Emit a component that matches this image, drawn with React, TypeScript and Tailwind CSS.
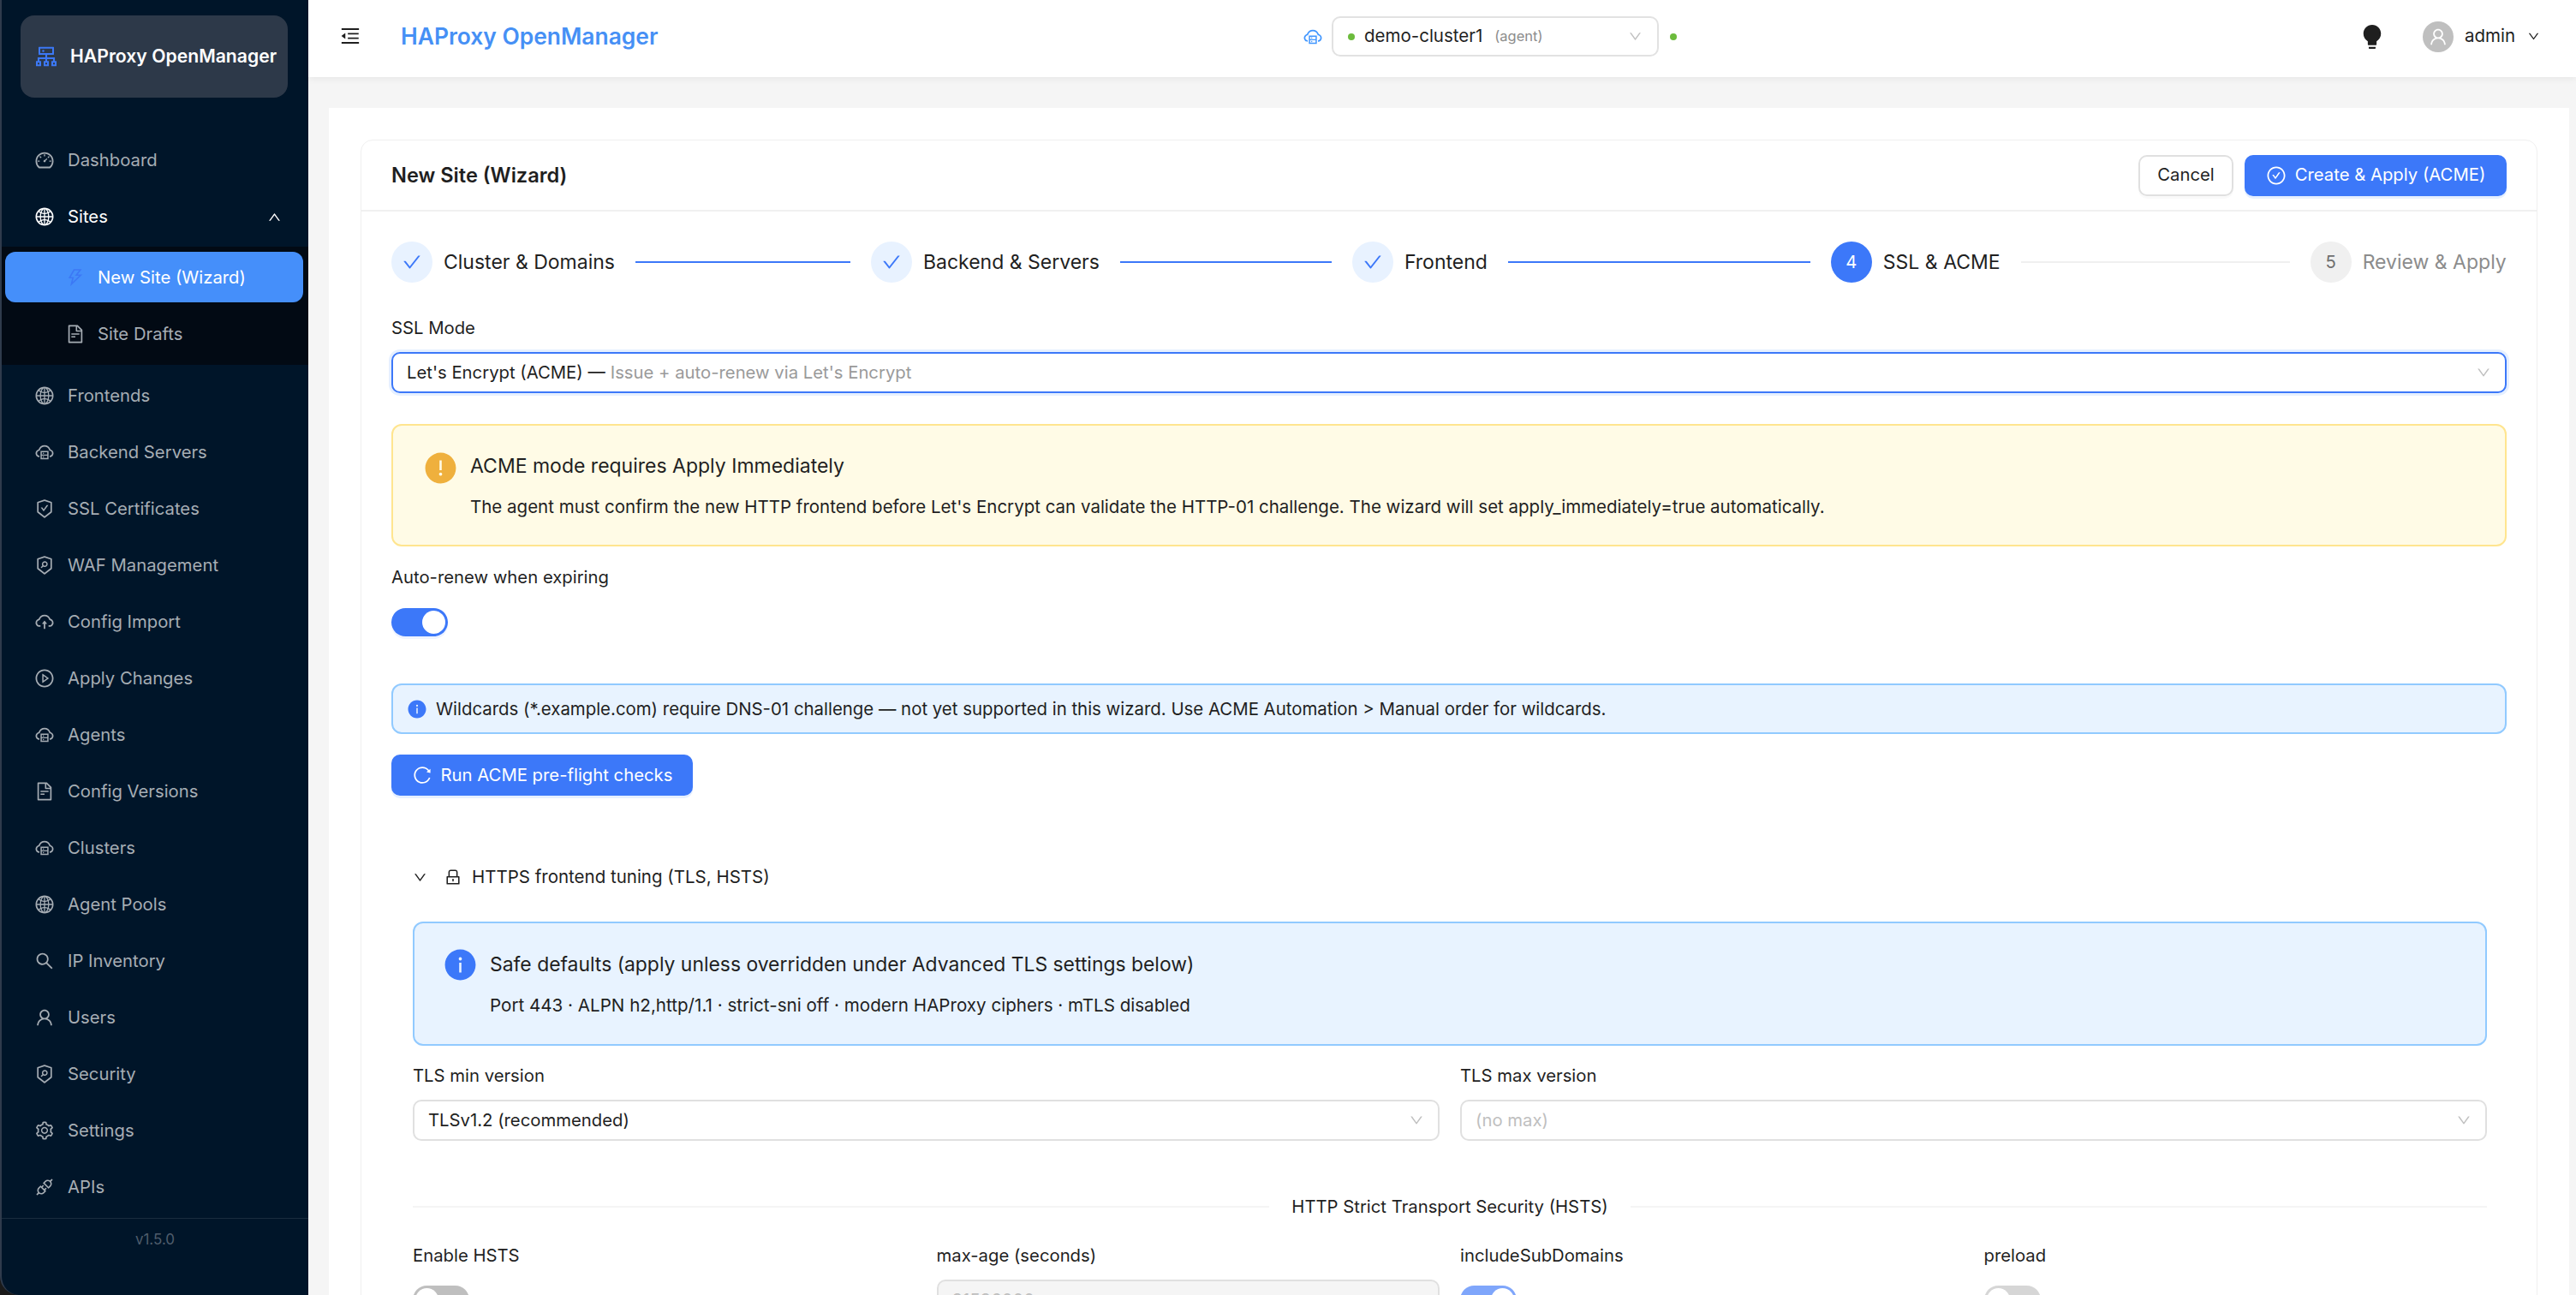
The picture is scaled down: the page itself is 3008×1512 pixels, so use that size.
import type { ReactNode } from "react";
import {
  AiOutlineDashboard,
  AiOutlineGlobal,
  AiOutlineThunderbolt,
  AiOutlineFileText,
  AiOutlineCloudServer,
  AiOutlineSafetyCertificate,
  AiOutlineSecurityScan,
  AiOutlineCloudUpload,
  AiOutlinePlayCircle,
  AiOutlineSearch,
  AiOutlineUser,
  AiOutlineSetting,
  AiOutlineApi,
  AiOutlineCluster,
  AiOutlineCheck,
  AiFillBulb,
  AiFillInfoCircle,
  AiFillExclamationCircle,
  AiOutlineMenuFold,
  AiOutlineLock,
  AiOutlineReload,
  AiOutlineCheckCircle,
  AiOutlineDown,
  AiOutlineUp,
} from "react-icons/ai";

const before = [
  { label: "Dashboard", icon: AiOutlineDashboard },
];

const after = [
  { label: "Frontends", icon: AiOutlineGlobal },
  { label: "Backend Servers", icon: AiOutlineCloudServer },
  { label: "SSL Certificates", icon: AiOutlineSafetyCertificate },
  { label: "WAF Management", icon: AiOutlineSecurityScan },
  { label: "Config Import", icon: AiOutlineCloudUpload },
  { label: "Apply Changes", icon: AiOutlinePlayCircle },
  { label: "Agents", icon: AiOutlineCloudServer },
  { label: "Config Versions", icon: AiOutlineFileText },
  { label: "Clusters", icon: AiOutlineCloudServer },
  { label: "Agent Pools", icon: AiOutlineGlobal },
  { label: "IP Inventory", icon: AiOutlineSearch },
  { label: "Users", icon: AiOutlineUser },
  { label: "Security", icon: AiOutlineSecurityScan },
  { label: "Settings", icon: AiOutlineSetting },
  { label: "APIs", icon: AiOutlineApi },
];

function MenuItem({ label, icon: Icon }: { label: string; icon: typeof AiOutlineGlobal }) {
  return (
    <div className="flex h-[58px] items-center gap-[15px] pl-[38px] text-[20.3px] text-[#a6adb4]">
      <Icon className="h-[24px] w-[24px] shrink-0" />
      <span className="pt-[1px]">{label}</span>
    </div>
  );
}

function Sidebar() {
  return (
    <aside className="flex h-full w-[360px] shrink-0 flex-col rounded-bl-[22px] border-l-2 border-[#2f3b4c] bg-[#001529]">
      <div className="ml-[22px] mr-[24px] mt-[18px] flex h-[96px] items-center gap-[12px] rounded-[16px] bg-[#2d3949] pl-[14px]">
        <AiOutlineCluster className="h-[32px] w-[32px] shrink-0 text-[#3c78f5]" />
        <span className="whitespace-nowrap text-[21.2px] font-semibold text-white">HAProxy OpenManager</span>
      </div>

      <nav className="mt-[44px] flex flex-col">
        {before.map((m) => (
          <MenuItem key={m.label} {...m} />
        ))}
        <div className="mt-[8px] flex h-[58px] items-center gap-[15px] pl-[38px] pr-[31px] text-[20.3px] text-white">
          <AiOutlineGlobal className="h-[24px] w-[24px] shrink-0" />
          <span className="pt-[1px]">Sites</span>
          <AiOutlineUp className="ml-auto h-[17px] w-[17px]" />
        </div>
        <div className="mt-[6px] flex h-[138px] flex-col bg-[#020a14] pt-[6px]">
          <div className="ml-[4px] mr-[6px] flex h-[59px] items-center gap-[14px] rounded-[12px] bg-[#458ffa] pl-[70px] text-[20.3px] text-white">
            <AiOutlineThunderbolt className="h-[24px] w-[24px] shrink-0 text-[#3c78f5]" />
            <span className="pt-[2px]">New Site (Wizard)</span>
          </div>
          <div className="ml-[4px] mr-[6px] mt-[8px] flex h-[58px] items-center gap-[14px] pl-[70px] text-[20.3px] text-[#a6adb4]">
            <AiOutlineFileText className="h-[24px] w-[24px] shrink-0" />
            <span className="pt-[1px]">Site Drafts</span>
          </div>
        </div>
        <div className="mt-[7px] flex flex-col gap-[8px]">
          {after.map((m) => (
            <MenuItem key={m.label} {...m} />
          ))}
        </div>
      </nav>

      <div className="mt-[7px] border-t border-[#1a2c3e] pt-[12px] text-center text-[17px] text-[#4f5d6c]">v1.5.0</div>
    </aside>
  );
}

function Topbar() {
  return (
    <header className="flex h-[90px] shrink-0 items-center bg-white pb-[5px] pr-[42px] shadow-[0_2px_8px_rgba(0,0,0,0.06)]">
      <div className="flex w-[1161px] shrink-0 items-center pl-[36px]">
        <AiOutlineMenuFold className="h-[26px] w-[26px] text-[#1f1f1f]" />
        <span className="ml-[46px] whitespace-nowrap text-[26.4px] font-semibold text-[#4690f5]">HAProxy OpenManager</span>
      </div>
      <AiOutlineCloudServer className="h-[24px] w-[24px] text-[#4096ff]" />
      <div className="ml-[10px] flex h-[47px] w-[382px] items-center rounded-[10px] border-2 border-[#e2e2e2] pl-[17px] pr-[17px]">
        <span className="h-[8px] w-[8px] rounded-full bg-[#6cbb3c]" />
        <span className="ml-[11px] text-[20.5px] text-[#1f1f1f]">demo-cluster1</span>
        <span className="ml-[14px] text-[16.5px] text-[#8c8c8c]">(agent)</span>
        <AiOutlineDown className="ml-auto h-[17px] w-[17px] text-[#bfbfbf]" />
      </div>
      <span className="ml-[13px] h-[8px] w-[8px] rounded-full bg-[#6cbb3c]" />
      <AiFillBulb className="ml-auto h-[32px] w-[32px] text-[#1f1f1f]" />
      <div className="ml-[43px] flex h-[36px] w-[36px] items-center justify-center rounded-full bg-[#bfbfbf]">
        <AiOutlineUser className="h-[24px] w-[24px] text-white" />
      </div>
      <span className="ml-[13px] text-[20.5px] text-[#1f1f1f]">admin</span>
      <AiOutlineDown className="ml-[14px] h-[15px] w-[15px] text-[#1f1f1f]" />
    </header>
  );
}

function StepDone({ title }: { title: string }) {
  return (
    <div className="flex shrink-0 items-center gap-[13px]">
      <div className="flex h-[48px] w-[48px] items-center justify-center rounded-full bg-[#e8f2ff]">
        <AiOutlineCheck className="h-[24px] w-[24px] text-[#3c78f9]" />
      </div>
      <span className="whitespace-nowrap text-[23px] text-[#1f1f1f]">{title}</span>
    </div>
  );
}

function Line({ w, on }: { w: string; on?: boolean }) {
  return <div className={`mx-[24px] h-[2px] shrink-0 ${w} ${on ? "bg-[#3c78f9]" : "bg-[#f0f0f0]"}`} />;
}

function Select({ children, className, border = "border-[#e0e0e0]" }: { children: ReactNode; className?: string; border?: string }) {
  return (
    <div className={`flex h-[48px] items-center rounded-[10px] border-2 bg-white pl-[16px] pr-[16px] text-[20.3px] ${border} ${className ?? ""}`}>
      {children}
      <AiOutlineDown className="ml-auto h-[18px] w-[18px] text-[#bfbfbf]" />
    </div>
  );
}

function Label({ children, className }: { children: ReactNode; className?: string }) {
  return <div className={`flex h-[28px] items-center text-[20.3px] text-[#1f1f1f] ${className ?? ""}`}>{children}</div>;
}

function Toggle({ on, color }: { on?: boolean; color: string }) {
  return (
    <div className={`flex h-[33px] w-[66px] items-center rounded-full p-[3px] ${color} ${on ? "justify-end" : "justify-start"}`}>
      <div className="h-[27px] w-[27px] rounded-full bg-white" />
    </div>
  );
}

function Wizard() {
  return (
    <div className="ml-[37px] mr-[37px] mt-[37px] flex-1 rounded-t-[14px] border border-[#f0f0f0]">
      <div className="flex h-[83px] items-center border-b-2 border-[#f0f0f0] pl-[35px] pr-[35px]">
        <h1 className="text-[23.6px] font-semibold text-[#1f1f1f]">New Site (Wizard)</h1>
        <button className="ml-auto h-[48px] w-[111px] rounded-[10px] border-2 border-[#e0e0e0] bg-white text-[20.3px] text-[#1f1f1f] shadow-[0_3px_0_rgba(0,0,0,0.02)]">
          Cancel
        </button>
        <button className="ml-[13px] flex h-[48px] w-[306px] items-center justify-center gap-[10px] rounded-[10px] bg-[#3c78f9] text-[20.3px] text-white shadow-[0_3px_0_#e6f0ff]">
          <AiOutlineCheckCircle className="h-[24px] w-[24px]" />
          Create &amp; Apply (ACME)
        </button>
      </div>

      <div className="px-[35px]">
        <div className="mt-[35px] flex items-center">
          <StepDone title="Cluster & Domains" />
          <Line w="w-[251px]" on />
          <StepDone title="Backend & Servers" />
          <Line w="w-[247px]" on />
          <StepDone title="Frontend" />
          <Line w="w-[353px]" on />
          <div className="flex shrink-0 items-center gap-[13px]">
            <div className="flex h-[48px] w-[48px] items-center justify-center rounded-full bg-[#3c78f9] text-[20.3px] text-white">4</div>
            <span className="text-[23px] text-[#1f1f1f]">SSL &amp; ACME</span>
          </div>
          <Line w="w-[314px]" />
          <div className="flex shrink-0 items-center gap-[13px]">
            <div className="flex h-[48px] w-[48px] items-center justify-center rounded-full bg-[#f0f0f0] text-[20.3px] text-[#6f6f6f]">5</div>
            <span className="whitespace-nowrap text-[23px] text-[#8c8c8c]">Review &amp; Apply</span>
          </div>
        </div>

        <Label className="mt-[39px]">SSL Mode</Label>
        <Select border="border-[#3c78f9]" className="mt-[14px] shadow-[0_0_0_3px_#e6f0ff]">
          <span className="text-[#1f1f1f]">Let's Encrypt (ACME) — </span>
          <span className="ml-[6px] text-[#9a9a9a]">Issue + auto-renew via Let's Encrypt</span>
        </Select>

        <div className="mt-[36px] flex h-[143px] items-start gap-[14px] rounded-[12px] border-2 border-[#ffe58f] bg-[#fffbe6] pl-[35px] pt-[29px]">
          <AiFillExclamationCircle className="h-[41px] w-[41px] shrink-0 text-[#efb03d]" />
          <div className="pt-[2px]">
            <div className="text-[23px] leading-[32px] text-[#1f1f1f]">ACME mode requires Apply Immediately</div>
            <div className="mt-[17px] text-[20.5px] leading-[30px] text-[#1f1f1f]">
              The agent must confirm the new HTTP frontend before Let's Encrypt can validate the HTTP-01 challenge. The wizard will set apply_immediately=true automatically.
            </div>
          </div>
        </div>

        <Label className="mt-[22px]">Auto-renew when expiring</Label>
        <div className="mt-[22px] w-fit rounded-full shadow-[0_3px_0_#eef3ff]">
          <Toggle on color="bg-[#3c78f9]" />
        </div>

        <div className="mt-[55px] flex h-[59px] items-center gap-[10px] rounded-[12px] border-2 border-[#91caff] bg-[#e8f3ff] pl-[16px]">
          <AiFillInfoCircle className="h-[24px] w-[24px] shrink-0 text-[#3c78f9]" />
          <span className="pt-[2px] text-[20.4px] text-[#1f1f1f]">
            Wildcards (*.example.com) require DNS-01 challenge — not yet supported in this wizard. Use ACME Automation &gt; Manual order for wildcards.
          </span>
        </div>

        <button className="mt-[24px] flex h-[48px] w-[352px] items-center justify-center gap-[10px] rounded-[10px] bg-[#3c78f9] text-[20.3px] text-white shadow-[0_3px_0_#e6f0ff]">
          <AiOutlineReload className="h-[24px] w-[24px]" />
          Run ACME pre-flight checks
        </button>

        <div className="ml-[25px] mr-[23px]">
          <div className="mt-[71px] flex h-[48px] items-center text-[20.5px] text-[#1f1f1f]">
            <AiOutlineDown className="h-[17px] w-[17px]" />
            <AiOutlineLock className="ml-[19px] h-[22px] w-[22px]" />
            <span className="ml-[11px]">HTTPS frontend tuning (TLS, HSTS)</span>
          </div>

          <div className="mt-[28px] flex h-[145px] items-start gap-[14px] rounded-[12px] border-2 border-[#91caff] bg-[#e8f3ff] pl-[33px] pt-[28px]">
            <AiFillInfoCircle className="h-[41px] w-[41px] shrink-0 text-[#3c78f9]" />
            <div className="pt-[4px]">
              <div className="text-[22.9px] leading-[32px] text-[#1f1f1f]">Safe defaults (apply unless overridden under Advanced TLS settings below)</div>
              <div className="mt-[17px] text-[20.6px] leading-[30px] text-[#1f1f1f]">
                Port 443 · ALPN h2,http/1.1 · strict-sni off · modern HAProxy ciphers · mTLS disabled
              </div>
            </div>
          </div>

          <div className="mt-[21px] grid grid-cols-2 gap-x-[24px]">
            <Label>TLS min version</Label>
            <Label>TLS max version</Label>
            <Select className="mt-[14px] text-[#1f1f1f]">TLSv1.2 (recommended)</Select>
            <Select className="mt-[14px] text-[#bfbfbf]">(no max)</Select>
          </div>

          <div className="mt-[63px] flex h-[28px] items-center gap-[26px] text-[20.3px] text-[#1f1f1f]">
            <div className="h-[2px] flex-1 bg-[#f5f5f5]" />
            <span>HTTP Strict Transport Security (HSTS)</span>
            <div className="h-[2px] flex-1 bg-[#f5f5f5]" />
          </div>

          <div className="mt-[29px] grid grid-cols-4 gap-x-[24px]">
            <Label>Enable HSTS</Label>
            <Label>max-age (seconds)</Label>
            <Label>includeSubDomains</Label>
            <Label>preload</Label>
            <div className="mt-[21px]">
              <Toggle color="bg-[#bfbfbf]" />
            </div>
            <div className="mt-[14px] flex h-[48px] items-center rounded-[10px] border-2 border-[#e0e0e0] bg-[#f5f5f5] pl-[16px] text-[20.3px] text-[#bfbfbf]">
              31536000
            </div>
            <div className="mt-[21px]">
              <Toggle on color="bg-[#7fa6fb]" />
            </div>
            <div className="mt-[21px]">
              <Toggle color="bg-[#d6d6d6]" />
            </div>
          </div>
        </div>
      </div>
    </div>
  );
}

export default function App() {
  return (
    <div className="flex h-[1512px] w-[3008px] overflow-hidden bg-[#1a1a1a] font-[Inter,sans-serif]">
      <Sidebar />
      <main className="flex min-w-0 flex-1 flex-col bg-[#f5f5f5]">
        <Topbar />
        <div className="ml-[24px] mr-[8px] mt-[36px] flex min-h-0 flex-1 flex-col overflow-hidden bg-white">
          <Wizard />
        </div>
      </main>
    </div>
  );
}
